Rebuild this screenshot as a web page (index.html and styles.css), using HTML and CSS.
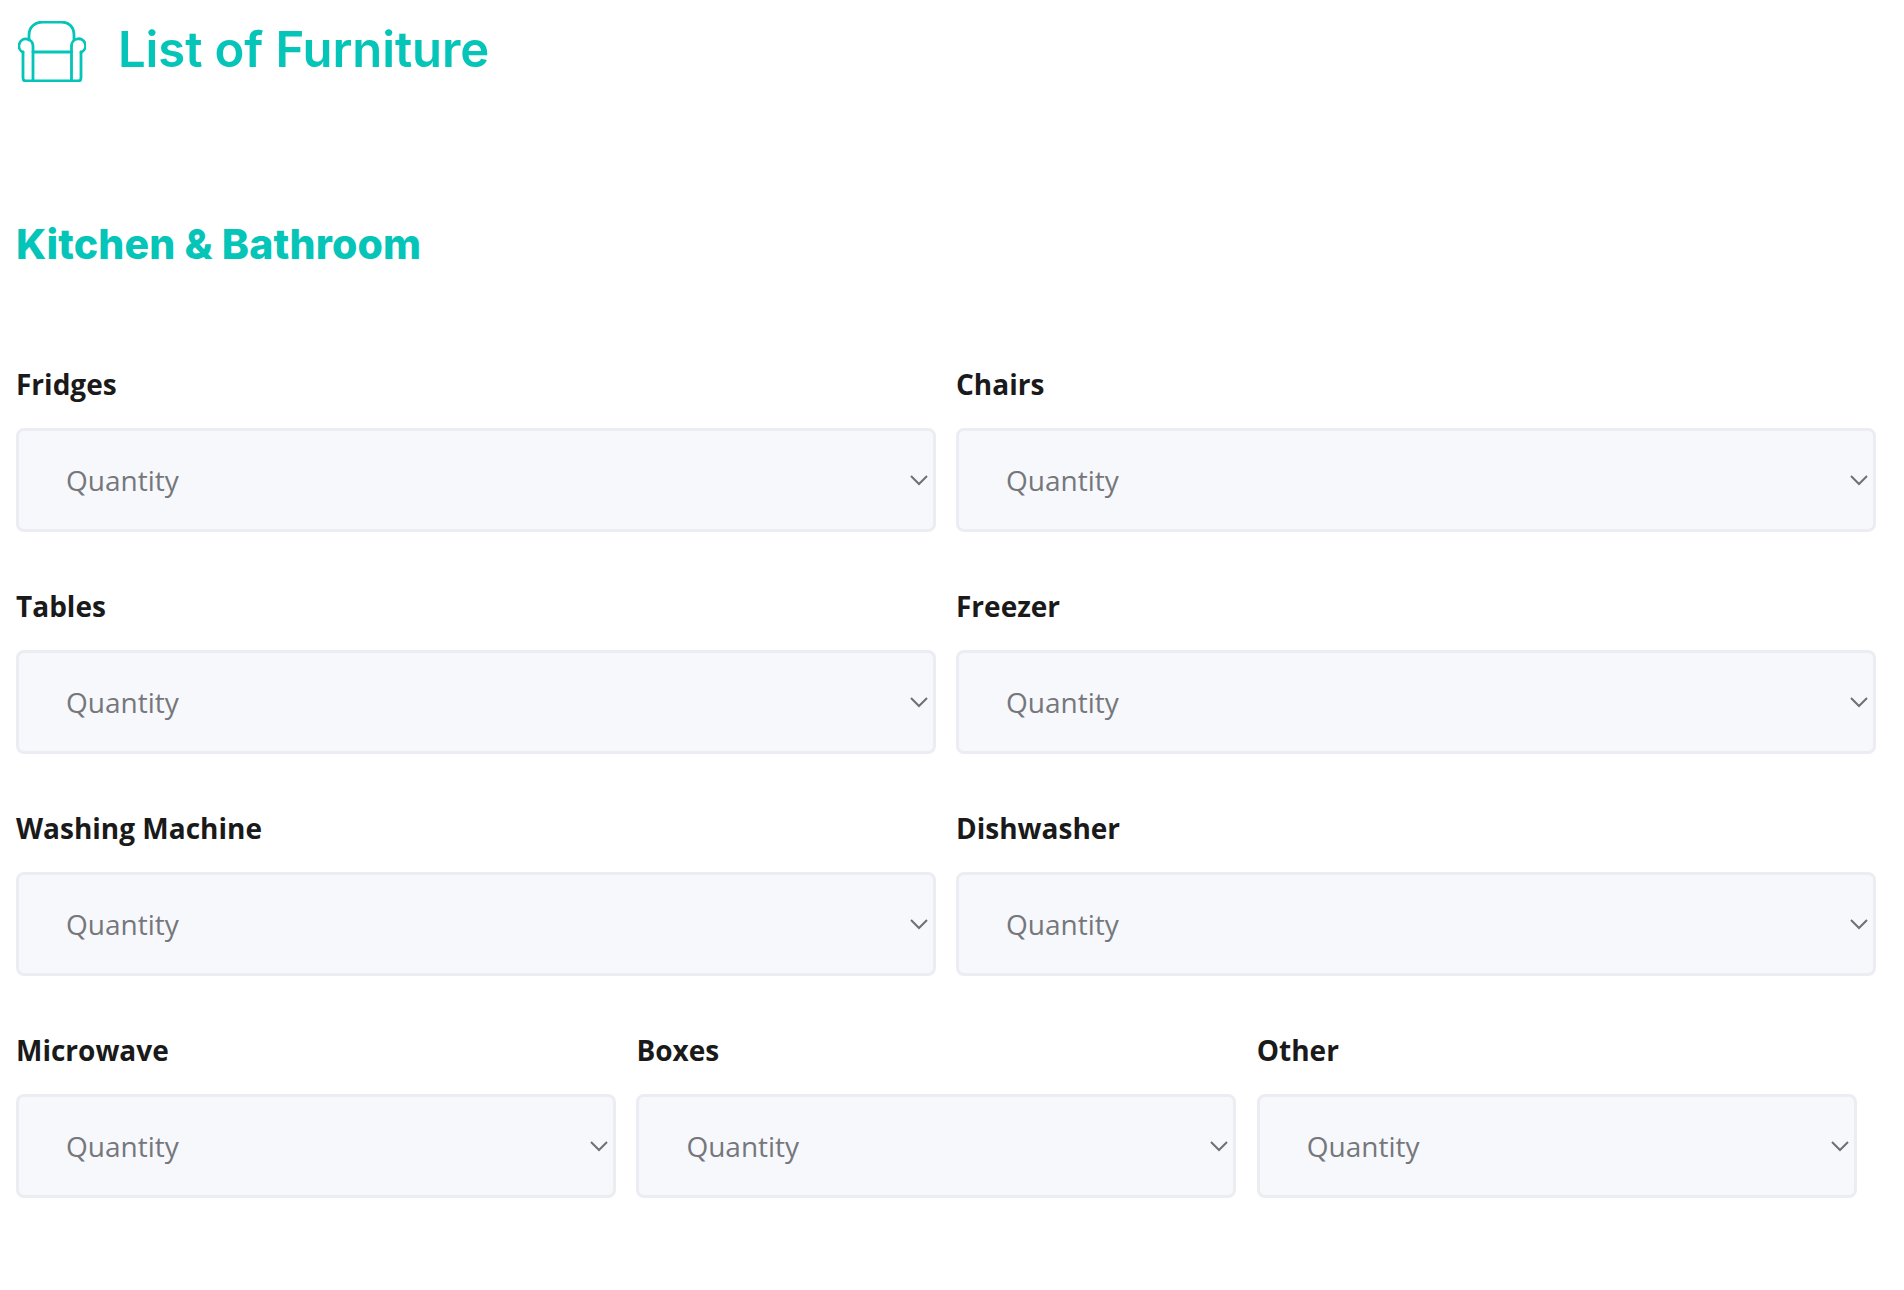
FILE: index.html
```html
<!DOCTYPE html>
<html lang="en">
<head>
    <meta charset="UTF-8">
    <meta name="viewport" content="width=device-width, initial-scale=1.0">
    <title>List of Furniture</title>
    <link rel="stylesheet" href="styles.css">
</head>
<body>
    <div class="header">
        <svg class="header-icon" viewBox="0 0 68 61" fill="none" stroke="#05c4b8" stroke-width="2.8" stroke-linecap="round" stroke-linejoin="round">
            <path d="M11 19V14C11 6 17 1 25 1H43C51 1 56 6 56 14V19"/>
            <path d="M5 31V57C5 59 6 60 8 60H60C62 60 63 59 63 57V31"/>
            <path d="M5 31.3A7 7 0 1 1 15 25V60"/>
            <path d="M63 31.3A7 7 0 1 0 53.5 25V60"/>
            <path d="M15 31H53.5"/>
        </svg>
        <h1>List of Furniture</h1>
    </div>

    <h2>Kitchen &amp; Bathroom</h2>

    <div class="form-row">
        <div class="form-group">
            <label for="fridges">Fridges</label>
            <div class="select-box">
                <select id="fridges"><option>Quantity</option></select>
                <svg class="chevron" viewBox="0 0 18 12"><path d="M1 2L9 10L17 2"/></svg>
            </div>
        </div>
        <div class="form-group">
            <label for="chairs">Chairs</label>
            <div class="select-box">
                <select id="chairs"><option>Quantity</option></select>
                <svg class="chevron" viewBox="0 0 18 12"><path d="M1 2L9 10L17 2"/></svg>
            </div>
        </div>
    </div>

    <div class="form-row">
        <div class="form-group">
            <label for="tables">Tables</label>
            <div class="select-box">
                <select id="tables"><option>Quantity</option></select>
                <svg class="chevron" viewBox="0 0 18 12"><path d="M1 2L9 10L17 2"/></svg>
            </div>
        </div>
        <div class="form-group">
            <label for="freezer">Freezer</label>
            <div class="select-box">
                <select id="freezer"><option>Quantity</option></select>
                <svg class="chevron" viewBox="0 0 18 12"><path d="M1 2L9 10L17 2"/></svg>
            </div>
        </div>
    </div>

    <div class="form-row">
        <div class="form-group">
            <label for="washing">Washing Machine</label>
            <div class="select-box">
                <select id="washing"><option>Quantity</option></select>
                <svg class="chevron" viewBox="0 0 18 12"><path d="M1 2L9 10L17 2"/></svg>
            </div>
        </div>
        <div class="form-group">
            <label for="dishwasher">Dishwasher</label>
            <div class="select-box">
                <select id="dishwasher"><option>Quantity</option></select>
                <svg class="chevron" viewBox="0 0 18 12"><path d="M1 2L9 10L17 2"/></svg>
            </div>
        </div>
    </div>

    <div class="form-row thirds">
        <div class="form-group">
            <label for="microwave">Microwave</label>
            <div class="select-box">
                <select id="microwave"><option>Quantity</option></select>
                <svg class="chevron" viewBox="0 0 18 12"><path d="M1 2L9 10L17 2"/></svg>
            </div>
        </div>
        <div class="form-group">
            <label for="boxes">Boxes</label>
            <div class="select-box">
                <select id="boxes"><option>Quantity</option></select>
                <svg class="chevron" viewBox="0 0 18 12"><path d="M1 2L9 10L17 2"/></svg>
            </div>
        </div>
        <div class="form-group">
            <label for="other">Other</label>
            <div class="select-box">
                <select id="other"><option>Quantity</option></select>
                <svg class="chevron" viewBox="0 0 18 12"><path d="M1 2L9 10L17 2"/></svg>
            </div>
        </div>
    </div>
</body>
</html>
```

FILE: styles.css
```css
body {
    font-family: "Open Sans", Arial, sans-serif;
    margin: 0;
    padding: 20px 28px 0 16px;
    background-color: #ffffff;
}
.header {
    display: flex;
    align-items: center;
    gap: 32px;
    height: 62px;
    padding-left: 2px;
}
.header-icon {
    width: 68px;
    height: 61px;
    flex: none;
}
h1 {
    margin: 0 0 3px;
    font-family: Inter, sans-serif;
    font-size: 49px;
    font-weight: 600;
    letter-spacing: -0.1px;
    color: #05c4b8;
}
h2 {
    margin: 139px 0 98px;
    font-family: Inter, sans-serif;
    font-size: 41px;
    line-height: 46px;
    font-weight: 800;
    letter-spacing: 0.15px;
    color: #05c4b8;
}
.form-row {
    display: grid;
    grid-template-columns: 920px 920px;
    gap: 20px;
    margin-bottom: 55px;
}
.form-row.thirds {
    grid-template-columns: 600px 600px 600px;
    gap: 20.4px;
}
.form-group label {
    display: block;
    height: 38px;
    margin-bottom: 25px;
    font-size: 28px;
    line-height: 38px;
    font-weight: 700;
    color: #1a1a1a;
}
.select-box {
    position: relative;
}
.select-box select {
    display: block;
    width: 100%;
    height: 104px;
    padding: 0 47px;
    border: 3px solid #ecedf3;
    border-radius: 8px;
    background-color: #f7f8fb;
    appearance: none;
    font-family: "Open Sans", Arial, sans-serif;
    font-size: 28px;
    color: #75777c;
}
.chevron {
    position: absolute;
    top: 46px;
    right: 8px;
    width: 18px;
    height: 12px;
    fill: none;
    stroke: #6e7074;
    stroke-width: 2;
}
```
